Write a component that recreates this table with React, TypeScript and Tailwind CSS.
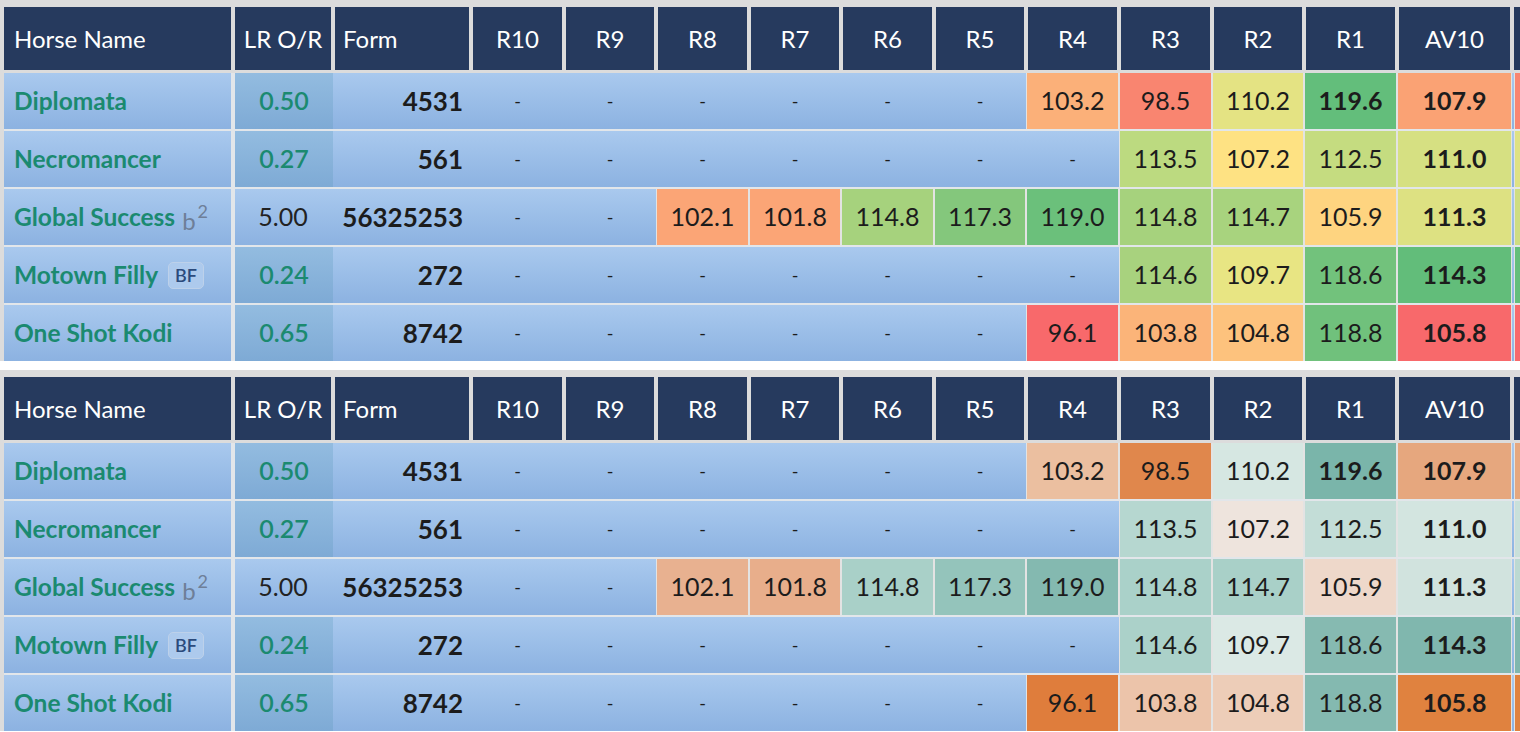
import React from "react";

// 표 한 줄의 데이터
interface HorseRow {
  name: string;
  tag?: "b2" | "BF";
  lr: string;
  lrHighlight: boolean;
  form: string;
  // R10..R1, null 이면 "-"
  runs: (null | { v: string; bg: string; bold?: boolean })[];
  av: { v: string; bg: string };
  edge: string;
}

const headers = ["R10", "R9", "R8", "R7", "R6", "R5", "R4", "R3", "R2", "R1"];

const c = (v: string, bg: string, bold = false) => ({ v, bg, bold });

const warmRows: HorseRow[] = [
  {
    name: "Diplomata",
    lr: "0.50",
    lrHighlight: true,
    form: "4531",
    runs: [null, null, null, null, null, null, c("103.2", "bg-[#fbb079]"), c("98.5", "bg-[#f98570]"), c("110.2", "bg-[#e4e383]"), c("119.6", "bg-[#63be7b]", true)],
    av: c("107.9", "bg-[#faa274]"),
    edge: "bg-[#f98570]",
  },
  {
    name: "Necromancer",
    lr: "0.27",
    lrHighlight: true,
    form: "561",
    runs: [null, null, null, null, null, null, null, c("113.5", "bg-[#bcda80]"), c("107.2", "bg-[#fee283]"), c("112.5", "bg-[#c5dc80]")],
    av: c("111.0", "bg-[#d6e082]"),
    edge: "bg-[#dfe283]",
  },
  {
    name: "Global Success",
    tag: "b2",
    lr: "5.00",
    lrHighlight: false,
    form: "56325253",
    runs: [null, null, c("102.1", "bg-[#fba576]"), c("101.8", "bg-[#fba576]"), c("114.8", "bg-[#a6d27d]"), c("117.3", "bg-[#84c77c]"), c("119.0", "bg-[#6bc07b]"), c("114.8", "bg-[#a6d27d]"), c("114.7", "bg-[#a8d37e]"), c("105.9", "bg-[#fed480]")],
    av: c("111.3", "bg-[#dde182]"),
    edge: "bg-[#cfdd81]",
  },
  {
    name: "Motown Filly",
    tag: "BF",
    lr: "0.24",
    lrHighlight: true,
    form: "272",
    runs: [null, null, null, null, null, null, null, c("114.6", "bg-[#a8d27e]"), c("109.7", "bg-[#e8e583]"), c("118.6", "bg-[#72c27c]")],
    av: c("114.3", "bg-[#62bd7a]"),
    edge: "bg-[#63be7b]",
  },
  {
    name: "One Shot Kodi",
    lr: "0.65",
    lrHighlight: true,
    form: "8742",
    runs: [null, null, null, null, null, null, c("96.1", "bg-[#f8696b]"), c("103.8", "bg-[#fbb479]"), c("104.8", "bg-[#fdc27d]"), c("118.8", "bg-[#70c17c]")],
    av: c("105.8", "bg-[#f8696b]"),
    edge: "bg-[#f8696b]",
  },
];

const tealRows: HorseRow[] = [
  {
    ...warmRows[0],
    runs: [null, null, null, null, null, null, c("103.2", "bg-[#ebbfa0]"), c("98.5", "bg-[#e0874c]"), c("110.2", "bg-[#d6e7e2]"), c("119.6", "bg-[#7ab5aa]", true)],
    av: c("107.9", "bg-[#e6a77e]"),
    edge: "bg-[#e6a77e]",
  },
  {
    ...warmRows[1],
    runs: [null, null, null, null, null, null, null, c("113.5", "bg-[#b6d7d0]"), c("107.2", "bg-[#eee4dd]"), c("112.5", "bg-[#c3ddd7]")],
    av: c("111.0", "bg-[#d3e5e0]"),
    edge: "bg-[#c9e0da]",
  },
  {
    ...warmRows[2],
    runs: [null, null, c("102.1", "bg-[#e8b190]"), c("101.8", "bg-[#e8ae8b]"), c("114.8", "bg-[#a9d0c8]"), c("117.3", "bg-[#94c4bb]"), c("119.0", "bg-[#84b9b0]"), c("114.8", "bg-[#aad1c9]"), c("114.7", "bg-[#a9d0c8]"), c("105.9", "bg-[#eed8ca]")],
    av: c("111.3", "bg-[#d1e3de]"),
    edge: "bg-[#bcd9d2]",
  },
  {
    ...warmRows[3],
    runs: [null, null, null, null, null, null, null, c("114.6", "bg-[#abd1c9]"), c("109.7", "bg-[#dbe9e5]"), c("118.6", "bg-[#86bab1]")],
    av: c("114.3", "bg-[#80b7ae]"),
    edge: "bg-[#80b7ae]",
  },
  {
    ...warmRows[4],
    runs: [null, null, null, null, null, null, c("96.1", "bg-[#df7d3c]"), c("103.8", "bg-[#ecc4aa]"), c("104.8", "bg-[#edcdb8]"), c("118.8", "bg-[#84b9b0]")],
    av: c("105.8", "bg-[#e0823f]"),
    edge: "bg-[#e0823f]",
  },
];

const rowBg = "bg-linear-to-b from-[#a9c9ee] to-[#8cb2e1]";

function HeaderRow() {
  return (
    <div className="grid h-[63px] grid-cols-[227px_96px_134px_89px_88px_89px_88px_89px_88px_89px_89px_88px_89px_111px_100px] gap-x-[4px] text-[24px] text-white">
      <div className="flex items-center bg-[#263a5e] pl-[10px]">Horse Name</div>
      <div className="flex items-center justify-center bg-[#263a5e]">LR O/R</div>
      <div className="flex items-center bg-[#263a5e] pl-[8px]">Form</div>
      {headers.map((h) => (
        <div key={h} className="flex items-center justify-center bg-[#263a5e]">
          {h}
        </div>
      ))}
      <div className="flex items-center justify-center bg-[#263a5e]">AV10</div>
      <div className="bg-[#263a5e]" />
    </div>
  );
}

function Tag({ tag }: { tag?: "b2" | "BF" }) {
  if (tag === "b2") {
    return (
      <span className="ml-[7px] flex items-start font-normal text-[#6e7f98]">
        <span className="mt-[7px] text-[24px] leading-none">b</span>
        <span className="ml-[2px] text-[18px] leading-none">2</span>
      </span>
    );
  }
  if (tag === "BF") {
    return (
      <span className="ml-[10px] flex h-[27px] items-center rounded-[5px] border border-[#bdd1ea] bg-[#adcaed] px-[6px] text-[18px] font-semibold leading-none text-[#2b4a7c]">
        BF
      </span>
    );
  }
  return null;
}

function DataRow({ row }: { row: HorseRow }) {
  return (
    <div className="flex h-[56px]">
      <div className={`flex w-[227px] shrink-0 items-center pl-[10px] text-[24.5px] font-bold text-[#1b8a70] ${rowBg}`}>
        {row.name}
        <Tag tag={row.tag} />
      </div>
      <div className="w-[4px] shrink-0" />
      <div className={`grid flex-1 grid-cols-[96px_134px_89px_88px_89px_88px_89px_88px_89px_89px_88px_89px_111px_100px] gap-x-[4px] text-[25px] text-[#1c1c1c] ${rowBg}`}>
        {row.lrHighlight ? (
          <div className="-mr-[2px] flex items-center justify-center bg-linear-to-b from-[#93bce0] to-[#7eaad5] font-semibold text-[#1b8a70]">
            {row.lr}
          </div>
        ) : (
          <div className="flex items-center justify-center text-[#222]">{row.lr}</div>
        )}
        <div className="flex items-center justify-end pr-[6px] text-[26px] font-bold">{row.form}</div>
        {row.runs.map((r, i) =>
          r ? (
            <div
              key={i}
              className={`-mx-[2px] flex items-center justify-center border-x border-[#e3e3e3] ${r.bg} ${r.bold ? "font-bold" : ""}`}
            >
              {r.v}
            </div>
          ) : (
            <div key={i} className="flex items-center justify-center text-[18px]">
              -
            </div>
          )
        )}
        <div className={`-mx-[2px] flex items-center justify-center border-x border-[#e3e3e3] font-bold ${row.av.bg}`}>
          {row.av.v}
        </div>
        <div className={`${row.edge} border-l border-[#e3e3e3]`} />
      </div>
    </div>
  );
}

function RatingsTable({ rows }: { rows: HorseRow[] }) {
  return (
    <div className="bg-[#dcdcdc] pl-[4px] pt-[7px]">
      <HeaderRow />
      <div className="mt-[3px] flex flex-col gap-[2px] bg-[#e2e6ea]">
        {rows.map((r) => (
          <DataRow key={r.name} row={r} />
        ))}
      </div>
    </div>
  );
}

export default function App() {
  return (
    <div className="h-[732px] w-[1520px] overflow-hidden bg-white font-[Lato,sans-serif]">
      <RatingsTable rows={warmRows} />
      <div className="h-[9px] bg-white" />
      <RatingsTable rows={tealRows} />
    </div>
  );
}
